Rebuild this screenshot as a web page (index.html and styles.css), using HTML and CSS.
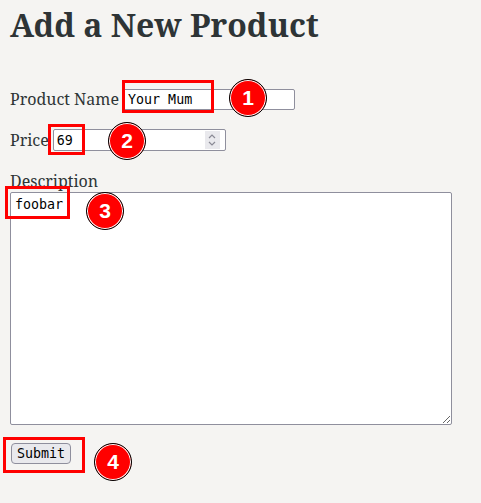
FILE: index.html
```html
<!DOCTYPE html>
<html>
<head>
<meta charset="utf-8">
<link rel="stylesheet" href="styles.css">
</head>
<body>
<h1 class="title">Add a New Product</h1>
<form class="form">
  <div class="row"><label class="lbl">Product Name</label><input class="field" type="text" value="Your Mum"></div>
  <div class="row"><label class="lbl">Price</label><span class="num"><input class="num-in" type="text" value="69"><span class="spin"><svg width="10" height="16" viewBox="0 0 10 16"><path d="M2 6 L5 3 L8 6" fill="none" stroke="#8a8a95" stroke-width="1.2"/><path d="M2 10 L5 13 L8 10" fill="none" stroke="#8a8a95" stroke-width="1.2"/></svg></span></span></div>
  <div class="row desc"><label class="lbl">Description</label><textarea class="area">foobar</textarea></div>
  <div class="row"><button class="btn" type="button">Submit</button></div>
</form>
<div class="anno box b1"></div>
<div class="anno dot d1">1</div>
<div class="anno box b2"></div>
<div class="anno dot d2">2</div>
<div class="anno box b3"></div>
<div class="anno dot d3">3</div>
<div class="anno box b4"></div>
<div class="anno dot d4">4</div>
</body>
</html>
```
FILE: styles.css
```css
html, body { background: #f5f4f2; }
body {
  margin: 0;
  padding: 3px 10px;
  font-family: "Noto Serif", "DejaVu Serif", serif;
  font-size: 16px;
  color: #2e3436;
  position: relative;
  min-height: 490px;
}
.title {
  margin: 0;
  font-size: 32px;
  font-weight: bold;
  line-height: 44px;
}
.form { margin-top: 41px; }
.row { display: flex; align-items: center; margin-bottom: 19px; height: 22px; }
.lbl { margin-right: 4px; }
.field, .num, .area {
  border: 1px solid #8f8f9d;
  background: #fff;
  border-radius: 2px;
  box-sizing: border-box;
}
.field, .num-in, .area, .btn {
  font-family: "DejaVu Sans Mono", monospace;
  font-size: 13.333px;
  color: #000;
}
.field { width: 172px; height: 21px; padding: 0 4px; outline: none; }
.num { display: inline-flex; align-items: center; width: 173px; height: 22px; }
.num-in { border: 0; outline: none; flex: 1; min-width: 0; padding: 0 3px; background: transparent; }
.spin { width: 15px; height: 18px; background: #e9e9ed; display: flex; align-items: center; justify-content: center; margin-right: 5px; }
.desc { display: block; height: auto; margin-bottom: 17px; }
.desc .lbl { display: block; line-height: 22px; }
.area { display: block; width: 442px; height: 233px; margin: 0; padding: 4px; resize: both; outline: none; }
.btn {
  background: #e9e9ed;
  border: 1px solid #8f8f9d;
  border-radius: 4px;
  height: 21px;
  padding: 0 5px;
  margin-left: 1px;
}
.anno { position: absolute; box-sizing: border-box; }
.box { border: 3px solid #f00; }
.b1 { left: 122px; top: 80px; width: 92px; height: 33px; }
.b2 { left: 48px; top: 124px; width: 37px; height: 31px; }
.b3 { left: 5px; top: 186px; width: 65px; height: 33px; }
.b4 { left: 3px; top: 437px; width: 82px; height: 36px; }
.dot {
  width: 38px; height: 38px; border-radius: 50%;
  background: #f00; border: 1.5px solid #000;
  box-shadow: inset 0 0 0 1px #fff;
  color: #fff; font-family: "Liberation Sans", Arial, sans-serif; font-weight: bold; font-size: 21px;
  display: flex; align-items: center; justify-content: center;
}
.d1 { left: 229px; top: 79px; }
.d2 { left: 108px; top: 122px; }
.d3 { left: 86px; top: 192px; }
.d4 { left: 94px; top: 443px; }
```
